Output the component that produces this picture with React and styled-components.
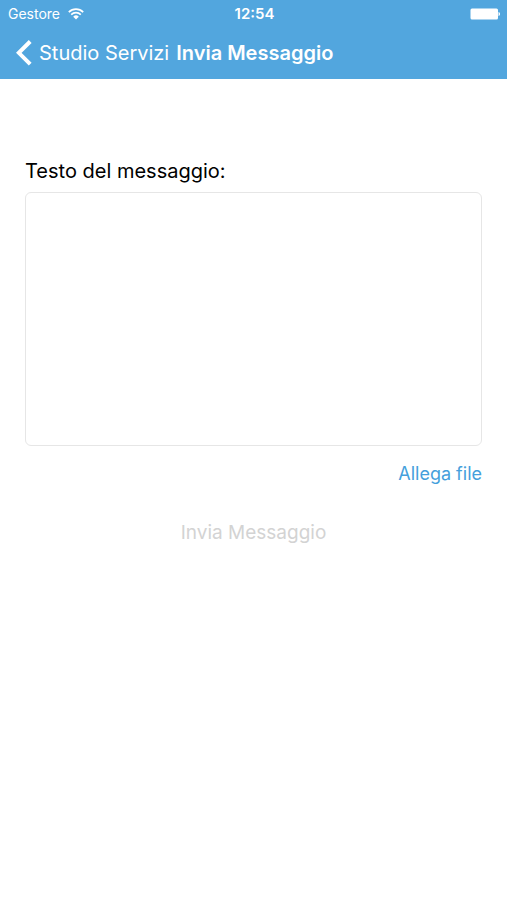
import React from "react";
import styled, { createGlobalStyle } from "styled-components";

const GlobalStyle = createGlobalStyle`
  * { box-sizing: border-box; }
  body {
    margin: 0;
    background: #fff;
    color: #000;
    font-family: Inter, "Liberation Sans", sans-serif;
  }
`;

const Header = styled.header`
  background: #52a6de;
  color: #fff;
`;

const StatusBar = styled.div`
  display: grid;
  grid-template-columns: 1fr auto 1fr;
  align-items: center;
  height: 27px;
  padding: 0 6px 0 8px;
`;

const Carrier = styled.span`
  display: flex;
  align-items: center;
  gap: 8px;
  font-size: 14px;
`;

const Clock = styled.time`
  font-size: 15px;
  font-weight: 600;
`;

const Battery = styled.svg`
  justify-self: end;
`;

const NavBar = styled.nav`
  display: flex;
  align-items: center;
  gap: 7px;
  height: 52px;
  padding: 0 16px;
`;

const BackLink = styled.a`
  display: flex;
  align-items: center;
  gap: 7px;
  color: inherit;
  font-size: 20px;
  text-decoration: none;
`;

const Title = styled.h1`
  margin: 0;
  font-size: 20px;
  font-weight: 600;
`;

const Form = styled.form`
  display: flex;
  flex-direction: column;
  padding: 79px 25px 0;
`;

const Label = styled.label`
  font-size: 20px;
  line-height: 26px;
`;

const MessageBox = styled.textarea`
  height: 254px;
  margin-top: 8px;
  padding: 8px;
  border: 1px solid #e6e6e6;
  border-radius: 6px;
  font: inherit;
  font-size: 18px;
  resize: none;
`;

const TextButton = styled.button`
  align-self: ${(p) => p.$align};
  margin-top: ${(p) => p.$top};
  padding: 0;
  border: 0;
  background: none;
  color: #459fdc;
  font: inherit;
  font-size: ${(p) => p.$size};
  line-height: 24px;

  &:disabled { color: #d3d3d3; }
`;

export default function App() {
  return (
    <>
      <GlobalStyle />
      <Header>
        <StatusBar>
          <Carrier>
            Gestore
            <svg width="16" height="12" viewBox="0 0 16 12" fill="none" stroke="currentColor" strokeWidth="1.7" aria-hidden="true">
              <path d="M.8 4.100a10.300 10.300 0 0 1 14.400 0M3.200 6.600a6.900 6.900 0 0 1 9.600 0" />
              <path d="M8 11.500 5.200 8.700a4 4 0 0 1 5.600 0z" fill="currentColor" stroke="none" />
            </svg>
          </Carrier>
          <Clock>12:54</Clock>
          <Battery width="31" height="12" viewBox="0 0 31 12" fill="currentColor" aria-label="Batteria">
            <rect x="0.500" y="0.500" width="27.500" height="11" rx="1.500" />
            <path d="M28.500 4c2 .4 2 3.600 0 4z" />
          </Battery>
        </StatusBar>
        <NavBar>
          <BackLink href="#studio-servizi">
            <svg width="16" height="26" viewBox="0 0 16 26" fill="none" stroke="currentColor" strokeWidth="4" aria-hidden="true">
              <path d="M14.200 1.500 2.800 12.800l11.400 11.300" />
            </svg>
            Studio Servizi
          </BackLink>
          <Title>Invia Messaggio</Title>
        </NavBar>
      </Header>
      <Form>
        <Label htmlFor="message">Testo del messaggio:</Label>
        <MessageBox id="message" />
        <TextButton type="button" $align="flex-end" $top="16px" $size="18px">Allega file</TextButton>
        <TextButton type="submit" disabled $align="center" $top="35px" $size="19px">Invia Messaggio</TextButton>
      </Form>
    </>
  );
}
